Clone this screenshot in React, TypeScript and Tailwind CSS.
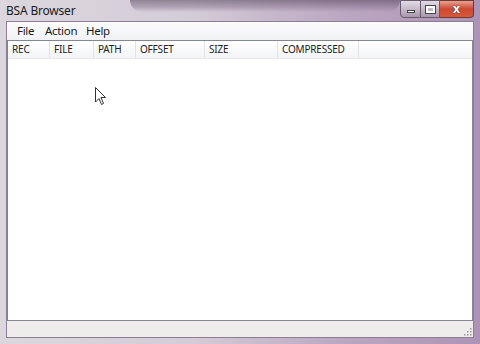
import React from "react";

const cols = [
  { name: "REC", w: 42 },
  { name: "FILE", w: 44 },
  { name: "PATH", w: 42 },
  { name: "OFFSET", w: 69 },
  { name: "SIZE", w: 73 },
  { name: "COMPRESSED", w: 81 },
];

export default function App() {
  return (
    <div
      className="relative w-[480px] h-[344px] overflow-hidden flex flex-col bg-[linear-gradient(90deg,#dcd7de_0%,#d4ccd7_40%,#bca8c2_70%,#ad93b5_100%)]"
      style={{ fontFamily: '"Segoe UI","Noto Sans","Liberation Sans",sans-serif' }}
    >
      {/* glass streaks */}
      <div className="absolute left-[130px] top-0 w-[270px] h-[12px] bg-[linear-gradient(180deg,#4a3a50_0%,#8e7a95_60%,transparent_100%)] opacity-50 rounded-b-[40px]" />
      {/* title bar */}
      <div className="relative h-[21px] flex items-center pl-[6px] shrink-0">
        <span className="text-[12px] text-[#1a1a1a] leading-none tracking-[-0.2px]">BSA Browser</span>
        <div className="absolute right-[6px] top-0 flex h-[18px]">
          <div className="w-[21px] h-full border border-[#6a5a6e] rounded-bl-[4px] bg-[linear-gradient(180deg,#e2dce4,#a898ad)] flex items-center justify-center">
            <div className="w-[8px] h-[3px] bg-white border border-[#444] mt-[5px]" />
          </div>
          <div className="w-[19px] h-full border-y border-r border-[#6a5a6e] bg-[linear-gradient(180deg,#e2dce4,#a898ad)] flex items-center justify-center">
            <div className="w-[9px] h-[7px] border-2 border-white outline outline-1 outline-[#444]" />
          </div>
          <div className="w-[34px] h-full border-y border-r border-[#6a3a30] rounded-br-[4px] bg-[linear-gradient(180deg,#eaa090,#cc4a30_50%,#d85a3e)] flex items-center justify-center">
            <span className="text-white font-bold text-[12px] leading-none" style={{ textShadow: "0 0 2px #333" }}>x</span>
          </div>
        </div>
      </div>
      {/* client */}
      <div className="flex-1 mx-[6px] mb-[6px] flex flex-col bg-[#f0f0f0] border border-[#8e7e94]">
        {/* menu */}
        <div className="h-[18px] flex items-center bg-[linear-gradient(180deg,#fcfcfc,#f1f2f5)] text-[11.5px] tracking-[-0.3px] text-[#1a1a1a]">
          <span className="ml-[10px] w-[28px]">File</span>
          <span className="w-[41px]">Action</span>
          <span>Help</span>
        </div>
        {/* list view */}
        <div className="flex-1 flex flex-col bg-white border border-[#828790]">
          <div className="h-[18px] flex bg-[linear-gradient(180deg,#ffffff,#f3f4f6)] border-b border-[#e8e8e8]">
            {cols.map((c) => (
              <div
                key={c.name}
                style={{ width: c.w }}
                className="h-full flex items-center pl-[4px] border-r border-[#e2e3ea] text-[10px] tracking-[-0.2px] text-[#222]"
              >
                {c.name}
              </div>
            ))}
            <div className="flex-1" />
          </div>
          <div className="flex-1" />
        </div>
        {/* status bar */}
        <div className="h-[16px] relative bg-[#efedeb]">
          <svg className="absolute right-[1px] bottom-[1px]" width="10" height="10" viewBox="0 0 10 10">
            {[
              [8, 8], [5, 8], [2, 8], [8, 5], [5, 5], [8, 2],
            ].map(([x, y], i) => (
              <rect key={i} x={x} y={y} width="1.5" height="1.5" fill="#9a9a9a" />
            ))}
          </svg>
        </div>
      </div>
      {/* mouse cursor */}
      <svg className="absolute left-[95px] top-[87px]" width="12" height="19" viewBox="0 0 12 19">
        <path d="M0.5 0.5 L0.5 15 L4 11.5 L6.5 17.5 L8.5 16.5 L6 10.5 L10.5 10.5 Z" fill="white" stroke="#333" strokeWidth="1" />
      </svg>
    </div>
  );
}
